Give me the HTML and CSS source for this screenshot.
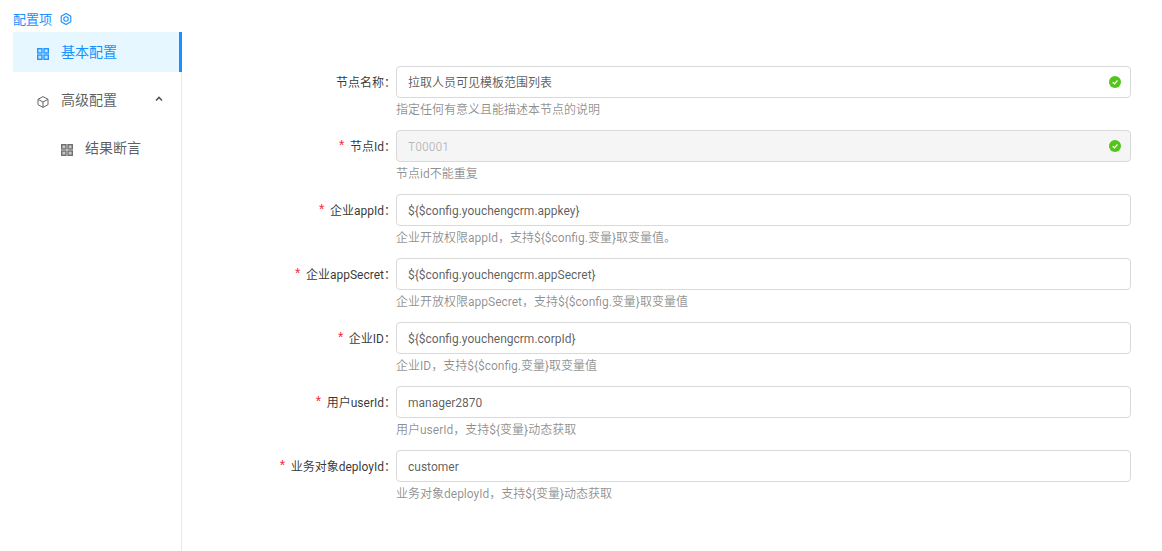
FILE: index.html
```html
<!DOCTYPE html>
<html lang="en">
  <head>
    <meta charset="UTF-8" />
    <title>配置项</title>
    <link rel="stylesheet" href="styles.css">
  </head>
  <body>
    <div class="page">
      <aside class="side">
        <div class="side_title">
          配置项
          <svg class="title_icon" viewBox="0 0 12 12" width="12" height="12">
            <path d="M6 0.6 L10.8 3.2 V8.8 L6 11.4 L1.2 8.8 V3.2 Z" fill="none" stroke="#1890ff" stroke-width="1.1" stroke-linejoin="round"/>
            <circle cx="6" cy="6" r="2.2" fill="none" stroke="#1890ff" stroke-width="1.1"/>
          </svg>
        </div>
        <ul class="menu">
          <li class="menu_item active">
            <svg class="menu_icon" viewBox="0 0 12 12" width="12" height="12">
              <g fill="#bfe0ff" stroke="#1890ff" stroke-width="1.3">
                <rect x="0.7" y="0.7" width="4.3" height="4.3"/>
                <rect x="7" y="0.7" width="4.3" height="4.3"/>
                <rect x="0.7" y="7" width="4.3" height="4.3"/>
                <rect x="7" y="7" width="4.3" height="4.3"/>
              </g>
            </svg>
            <span>基本配置</span>
          </li>
          <li class="menu_item">
            <svg class="menu_icon" viewBox="0 0 12 12" width="12" height="12">
              <g fill="none" stroke="#666" stroke-width="1" stroke-linejoin="round">
                <path d="M6 0.6 L11 3.3 V8.7 L6 11.4 L1 8.7 V3.3 Z"/>
                <path d="M1 3.3 L6 6 L11 3.3 M6 6 V11.4"/>
              </g>
            </svg>
            <span>高级配置</span>
            <svg class="arrow" viewBox="0 0 8 6" width="8" height="6">
              <path d="M1 4.5 L4 1.5 L7 4.5" fill="none" stroke="#555" stroke-width="1.6"/>
            </svg>
          </li>
          <li class="menu_item sub">
            <svg class="menu_icon" viewBox="0 0 12 12" width="12" height="12">
              <g fill="#c8c8c8" stroke="#666" stroke-width="1.3">
                <rect x="0.7" y="0.7" width="4.3" height="4.3"/>
                <rect x="7" y="0.7" width="4.3" height="4.3"/>
                <rect x="0.7" y="7" width="4.3" height="4.3"/>
                <rect x="7" y="7" width="4.3" height="4.3"/>
              </g>
            </svg>
            <span>结果断言</span>
          </li>
        </ul>
      </aside>

      <form class="form">
        <div class="row">
          <label class="label">节点名称：</label>
          <div class="control">
            <div class="input">拉取人员可见模板范围列表
              <svg class="ok" viewBox="0 0 12 12" width="12" height="12"><circle cx="6" cy="6" r="6" fill="#52c41a"/><path d="M3.6 6.1 L5.4 7.8 L8.5 4.5" fill="none" stroke="#fff" stroke-width="1.2"/></svg>
            </div>
            <div class="help">指定任何有意义且能描述本节点的说明</div>
          </div>
        </div>
        <div class="row">
          <label class="label"><span class="req">*</span>节点Id：</label>
          <div class="control">
            <div class="input disabled">T00001
              <svg class="ok" viewBox="0 0 12 12" width="12" height="12"><circle cx="6" cy="6" r="6" fill="#52c41a"/><path d="M3.6 6.1 L5.4 7.8 L8.5 4.5" fill="none" stroke="#fff" stroke-width="1.2"/></svg>
            </div>
            <div class="help">节点id不能重复</div>
          </div>
        </div>
        <div class="row">
          <label class="label"><span class="req">*</span>企业appId：</label>
          <div class="control">
            <div class="input">${$config.youchengcrm.appkey}</div>
            <div class="help">企业开放权限appId，支持${$config.变量}取变量值。</div>
          </div>
        </div>
        <div class="row">
          <label class="label"><span class="req">*</span>企业appSecret：</label>
          <div class="control">
            <div class="input">${$config.youchengcrm.appSecret}</div>
            <div class="help">企业开放权限appSecret，支持${$config.变量}取变量值</div>
          </div>
        </div>
        <div class="row">
          <label class="label"><span class="req">*</span>企业ID：</label>
          <div class="control">
            <div class="input">${$config.youchengcrm.corpId}</div>
            <div class="help">企业ID，支持${$config.变量}取变量值</div>
          </div>
        </div>
        <div class="row">
          <label class="label"><span class="req">*</span>用户userId：</label>
          <div class="control">
            <div class="input">manager2870</div>
            <div class="help">用户userId，支持${变量}动态获取</div>
          </div>
        </div>
        <div class="row">
          <label class="label"><span class="req">*</span>业务对象deployId：</label>
          <div class="control">
            <div class="input">customer</div>
            <div class="help">业务对象deployId，支持${变量}动态获取</div>
          </div>
        </div>
      </form>
    </div>
  </body>
</html>
```

FILE: styles.css
```css
* {
  box-sizing: border-box;
}
html, body {
  height: 100%;
}
body {
  margin: 0;
  background: #fff;
  font-family: Roboto, "Noto Sans CJK SC", sans-serif;
  font-size: 12px;
  color: rgba(0, 0, 0, 0.65);
  overflow: hidden;
}
.page {
  display: flex;
  height: 551px;
}

/* left menu */
.side {
  width: 182px;
  flex: none;
  padding: 9px 0 0 13px;
}
.side_title {
  display: flex;
  align-items: center;
  gap: 8px;
  height: 19px;
  font-size: 13px;
  color: #1890ff;
}
.title_icon {
  margin-top: 1px;
}
.menu {
  list-style: none;
  margin: 4px 0 0 -13px;
  padding: 0 0 0 13px;
  height: 519px;
  border-right: 1px solid #e8e8e8;
}
.menu_item {
  position: relative;
  display: flex;
  align-items: center;
  height: 40px;
  margin-bottom: 8px;
  padding-left: 24px;
  font-size: 14px;
}
.menu_item span {
  margin-top: -2px;
}
.menu_icon {
  margin: 3px 12px 0 0;
  flex: none;
}
.menu_item.active {
  margin-right: -1px;
  background: #e6f7ff;
  border-right: 3px solid #1890ff;
  color: #1890ff;
}
.menu_item.sub {
  padding-left: 48px;
}
.arrow {
  position: absolute;
  right: 18px;
  top: 16px;
}

/* form */
.form {
  flex: 1;
  padding: 66px 31px 0 0;
}
.row {
  display: flex;
  height: 64px;
}
.label {
  width: 214px;
  flex: none;
  height: 32px;
  line-height: 34px;
  text-align: right;
  color: rgba(0, 0, 0, 0.8);
}
.req {
  margin-right: 4px;
  color: #f5222d;
  font-family: "Liberation Mono", monospace;
  font-size: 14px;
}
.control {
  flex: 1;
}
.input {
  position: relative;
  height: 32px;
  padding: 0 11px;
  line-height: 32px;
  background: #fff;
  border: 1px solid #d9d9d9;
  border-radius: 4px;
}
.input.disabled {
  background: #f5f5f5;
  color: rgba(0, 0, 0, 0.25);
}
.ok {
  position: absolute;
  right: 9px;
  top: 9px;
}
.help {
  height: 20px;
  margin-top: 2px;
  line-height: 20px;
  color: rgba(0, 0, 0, 0.45);
}
```
